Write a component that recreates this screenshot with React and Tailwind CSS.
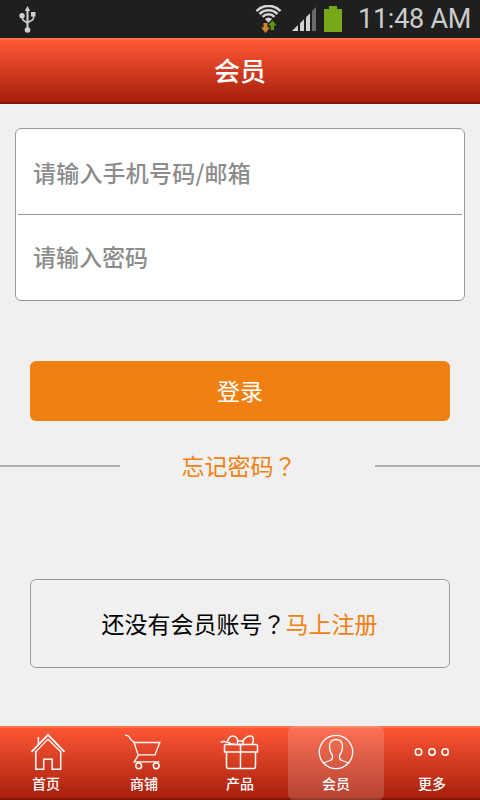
import React, { useState } from 'react';
import clsx from 'clsx';

const UsbIcon = () => (
    <svg width="18" height="28" viewBox="0 0 18 28" fill="none" stroke="#d0d0d0" strokeWidth="1.6">
        <path d="M8.5 4v19" strokeWidth="2" />
        <path d="M3.5 10v3.5q0 1.5 1.5 2.2l3.5 2.3M14.5 9v4q0 1.5-1.5 2.2L8.5 17.5" />
        <path d="M8.5 1l2.7 5H5.8z" fill="#d0d0d0" stroke="none" />
        <circle cx="3" cy="10.8" r="2.7" fill="#d0d0d0" stroke="none" />
        <path d="M12 7h4.5v4.5H12z" fill="#d0d0d0" stroke="none" />
        <circle cx="8.5" cy="25" r="2.8" fill="#d0d0d0" stroke="none" />
    </svg>
);

const WifiIcon = () => (
    <svg width="28" height="28" viewBox="0 0 28 28" fill="none" stroke="#d4d4d4" strokeWidth="2.6">
        <path d="M1.5 6.1a16.5 16.5 0 0 1 24 0" />
        <path d="M4.6 9a12.3 12.3 0 0 1 17.8 0" />
        <path d="M7.6 11.8a8.2 8.2 0 0 1 11.8 0" />
        <path d="M13.5 17.8L9.9 14a5 5 0 0 1 7.2 0z" fill="#d4d4d4" stroke="none" />
        <path d="M8.5 18h4v4.5H15L10.5 28 6 22.5h2.5z" fill="#cc8432" stroke="none" />
        <path d="M15.7 25h3.4v-4.5h2.6l-4.3-5-4.3 5h2.6z" fill="#5d9a10" stroke="none" />
    </svg>
);

const SignalIcon = () => (
    <svg width="24" height="24" viewBox="0 0 24 24" fill="#d2d2d2">
        <path d="M0 24l6-6v6z" />
        <path d="M8 16.2l4-4V24H8z" />
        <path d="M14 10.2l4-4V24h-4z" />
        <path d="M20 4l4-4v24h-4z" fill="#6a6a6a" />
    </svg>
);

const BatteryIcon = () => (
    <svg width="18" height="26" viewBox="0 0 18 26" fill="#76a819">
        <path d="M5 0h8v3h5v23H0V3h5z" />
    </svg>
);

const HomeIcon = () => (
    <svg width="36" height="38" viewBox="0 0 36 38" fill="none" stroke="#fff" strokeWidth="1.5">
        <path d="M1.5 18.8L18 1.8l16.5 17" strokeWidth="1.7" />
        <path d="M5.8 18.8L18 6.2l12.7 12.6" strokeWidth="1.2" />
        <path d="M5.8 17.5v18.8h7.9V26.2h8.5v10.1h8.5V17.5" />
        <path d="M8.4 11V4" />
    </svg>
);

const CartIcon = () => (
    <svg width="38" height="38" viewBox="0 0 38 38" fill="none" stroke="#fff" strokeWidth="1.3">
        <path d="M0 2.2q4 0 5.5 4L9 9.2l4.2 13.2-4 6.4h25.2" />
        <path d="M8.5 9.5h26.3L30 21.8H13" />
        <circle cx="13.7" cy="32.8" r="2.9" strokeWidth="1.5" />
        <circle cx="31.2" cy="32.8" r="2.9" strokeWidth="1.5" />
    </svg>
);

const GiftIcon = () => (
    <svg width="40" height="38" viewBox="0 0 40 38" fill="none" stroke="#fff" strokeWidth="1.5">
        <path d="M5.5 11.5h31l1 1V19h-33v-6.5z" />
        <path d="M6.5 19v14.5q0 2 2 2h25q2 0 2-2V19M20.5 11.5v24" />
        <path d="M.5 9.5Q3.5 7.5 7 9.2q4 2 8.5 2.3" />
        <path d="M7.5 8.5C8.5 5 10.5 3 12.8 3c3 0 4.7 2.5 5.2 5.5" />
        <path d="M22.5 8.5C24.5 5 28 3 30.5 3c3.5 0 3.7 4.5 1.5 8.5" />
        <path d="M17.5 8H23v3.5h-5.500z" />
    </svg>
);

const MemberIcon = () => (
    <svg width="36" height="36" viewBox="0 0 36 36" fill="none" stroke="#fff" strokeWidth="1.3">
        <circle cx="18" cy="18" r="16.7" />
        <path d="M5 29l7-2.5q3-1 2.5-5c-2-2.5-3-5-3-9 0-4.500 2.500-7 6.500-7s6.500 2.500 6.500 7c0 4-1 6.500-3 9q-.5 4 2.500 5l7 2.500" />
    </svg>
);

const MoreIcon = () => (
    <svg width="36" height="36" viewBox="0 0 36 36" fill="none" stroke="#fff" strokeWidth="1.6">
        <circle cx="4.5" cy="18" r="3.2" />
        <circle cx="18" cy="18" r="3.2" />
        <circle cx="31.2" cy="18" r="3.2" />
    </svg>
);

const tabs = [
    { id: 'home', label: '首页', icon: HomeIcon },
    { id: 'shop', label: '商铺', icon: CartIcon },
    { id: 'product', label: '产品', icon: GiftIcon },
    { id: 'member', label: '会员', icon: MemberIcon },
    { id: 'more', label: '更多', icon: MoreIcon }
];

// Full-width question mark, centred in its cell
const QuestionMark = () => (
    <span lang="zh-TW" className="font-['Noto_Sans_CJK_TC',sans-serif]">？</span>
);

const StatusBar = () => (
    <div className="h-[38px] shrink-0 bg-[#1f1f1f] flex items-center pl-[19px] pr-[9px]">
        <UsbIcon />
        <div className="ml-auto flex items-center">
            <WifiIcon />
            <div className="ml-[9px]">
                <SignalIcon />
            </div>
            <div className="ml-2">
                <BatteryIcon />
            </div>
            <span className="w-[113px] ml-4 font-[Roboto,sans-serif] text-[27px] leading-[38px] tracking-[-0.25px] text-[#cccccc] whitespace-nowrap">
                11:48 AM
            </span>
        </div>
    </div>
);

const App = () => {
    const [active, setActive] = useState('member');
    const [account, setAccount] = useState('');
    const [password, setPassword] = useState('');

    return (
        <div className="w-[480px] h-[800px] flex flex-col overflow-hidden bg-[#f0f0f0] font-['Noto_Sans_CJK_SC',sans-serif] text-[23px]">
            <StatusBar />

            <header className="h-[66px] shrink-0 flex items-center justify-center pb-[3px] bg-linear-to-b from-[#ff5836] to-[#a61d09] border-t-2 border-t-[#ff704f] border-b-2 border-b-[#81170a]">
                <h1 className="text-[26px] leading-none font-medium text-white">会员</h1>
            </header>

            <main className="flex-1 flex flex-col">
                <div className="mt-6 mx-[15px] h-[173px] bg-white border border-[#999999] rounded-md px-0.5 flex flex-col">
                    <input
                        type="text"
                        value={account}
                        onChange={(e) => setAccount(e.target.value)}
                        placeholder="请输入手机号码/邮箱"
                        className="h-[86px] px-[15px] font-medium tracking-[0.2px] border-b border-[#999999] placeholder:text-[#8c8c8c] outline-none"
                    />
                    <input
                        type="password"
                        value={password}
                        onChange={(e) => setPassword(e.target.value)}
                        placeholder="请输入密码"
                        className="h-[85px] pb-1 px-[15px] font-medium placeholder:text-[#8c8c8c] outline-none"
                    />
                </div>

                <button className="mt-[60px] mx-[30px] h-[60px] pb-0.5 rounded-md bg-[#f08011] text-white">
                    登录
                </button>

                <div className="mt-[25px] h-10 flex items-center justify-between">
                    <div className="w-[120px] h-0.5 bg-[#b0b0b0]" />
                    <a className="text-[#f08011] leading-10 pb-0.5 ml-[-17px]">忘记密码<QuestionMark /></a>
                    <div className="w-[105px] h-0.5 bg-[#b0b0b0]" />
                </div>

                <div className="mt-[93px] mx-[30px] h-[89px] pr-px pb-px border border-[#999999] rounded-md flex items-center justify-center text-black">
                    <span>还没有会员账号<QuestionMark /></span>
                    <a className="text-[#f08011]">马上注册</a>
                </div>
            </main>

            <nav className="h-[74px] shrink-0 flex bg-linear-to-b from-[#ff5836] to-[#a61d09] shadow-[inset_0_2px_0_#ff704f,inset_0_-2px_0_#81170a]">
                {tabs.map(({ id, label, icon: Icon }) => (
                    <button
                        key={id}
                        onClick={() => setActive(id)}
                        className={clsx(
                            'w-24 flex flex-col items-center pt-[7px] rounded-md text-white',
                            active === id && 'bg-white/16'
                        )}
                    >
                        <div className="h-[38px] flex items-center">
                            <Icon />
                        </div>
                        <span className={clsx('text-sm leading-6 font-medium', id === 'home' && 'mr-1')}>
                            {label}
                        </span>
                    </button>
                ))}
            </nav>
        </div>
    );
};

export default App;
